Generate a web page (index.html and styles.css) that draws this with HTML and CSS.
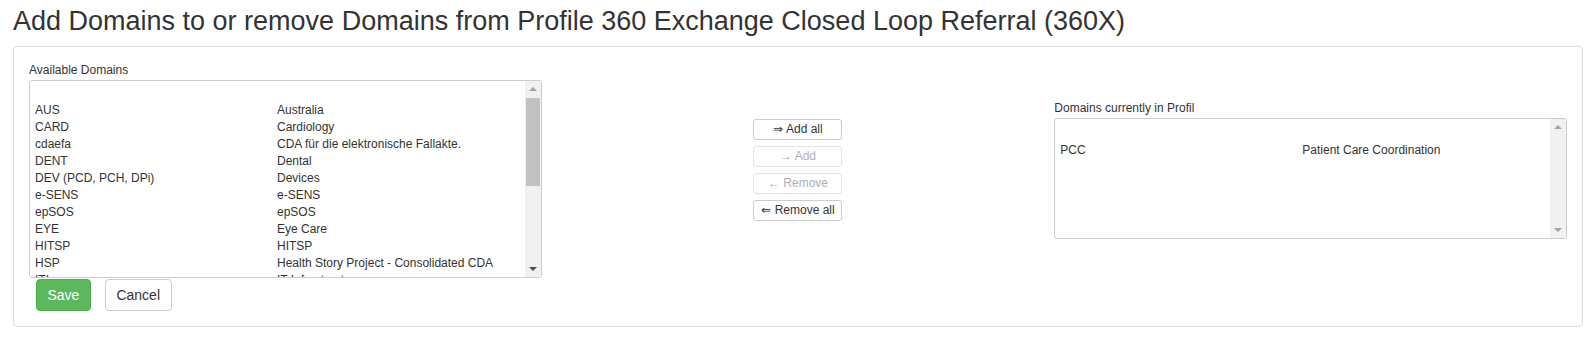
FILE: index.html
```html
<!DOCTYPE html>
<html lang="de">

<head>
    <meta charset="UTF-8">
    <meta name="viewport" content="width=device-width, initial-scale=1.0">
    <title>Profile Domains</title>
    <link rel="stylesheet" href="styles.css">
</head>

<body>
    <h1 class="page-title">Add Domains to or remove Domains from Profile 360 Exchange Closed Loop Referral (360X)</h1>

    <div class="panel">
        <div class="picker">
            <!-- verfügbare Domains -->
            <div class="picker-col">
                <div class="field-label">Available Domains</div>
                <div class="listbox listbox-tall">
                    <div class="listbox-items">
                        <div class="item"></div>
                        <div class="item"><span class="code">AUS</span><span>Australia</span></div>
                        <div class="item"><span class="code">CARD</span><span>Cardiology</span></div>
                        <div class="item"><span class="code">cdaefa</span><span>CDA für die elektronische Fallakte.</span></div>
                        <div class="item"><span class="code">DENT</span><span>Dental</span></div>
                        <div class="item"><span class="code">DEV (PCD, PCH, DPi)</span><span>Devices</span></div>
                        <div class="item"><span class="code">e-SENS</span><span>e-SENS</span></div>
                        <div class="item"><span class="code">epSOS</span><span>epSOS</span></div>
                        <div class="item"><span class="code">EYE</span><span>Eye Care</span></div>
                        <div class="item"><span class="code">HITSP</span><span>HITSP</span></div>
                        <div class="item"><span class="code">HSP</span><span>Health Story Project - Consolidated CDA</span></div>
                        <div class="item"><span class="code">ITI</span><span>IT Infrastructure</span></div>
                        <div class="item"><span class="code">LAB</span><span>Laboratory</span></div>
                    </div>
                    <div class="scrollbar">
                        <span class="arrow arrow-up"></span>
                        <div class="track"><div class="thumb"></div></div>
                        <span class="arrow arrow-down active"></span>
                    </div>
                </div>
            </div>

            <!-- Aktionen -->
            <div class="picker-actions">
                <button class="move-btn">⇒ Add all</button>
                <button class="move-btn" disabled>→ Add</button>
                <button class="move-btn" disabled>← Remove</button>
                <button class="move-btn">⇐ Remove all</button>
            </div>

            <!-- Domains im Profil -->
            <div class="picker-col">
                <div class="field-label">Domains currently in Profil</div>
                <div class="listbox listbox-short">
                    <div class="listbox-items">
                        <div class="item"></div>
                        <div class="item"><span class="code">PCC</span><span>Patient Care Coordination</span></div>
                    </div>
                    <div class="scrollbar">
                        <span class="arrow arrow-up"></span>
                        <div class="track"></div>
                        <span class="arrow arrow-down"></span>
                    </div>
                </div>
            </div>
        </div>

        <div class="form-actions">
            <button class="btn btn-save">Save</button>
            <button class="btn btn-cancel">Cancel</button>
        </div>
    </div>
</body>

</html>
```

FILE: styles.css
```css
body {
    font-family: 'Liberation Sans', Arial, sans-serif;
    font-size: 12px;
    color: #333;
    background: #fff;
    margin: 0;
    padding: 0 10px 0 13px;
}

.page-title {
    font-size: 27px;
    font-weight: normal;
    line-height: 1.1;
    margin: 7px 0 9px;
    color: #333;
}

.panel {
    border: 1px solid #ddd;
    border-radius: 4px;
    padding: 15px 15px 15px;
}

/* Auswahl */
.picker {
    display: grid;
    grid-template-columns: 1fr 1fr 1fr;
    align-items: center;
}

.field-label {
    line-height: 16px;
    margin-bottom: 2px;
}

.listbox {
    display: flex;
    border: 1px solid #ccc;
    border-radius: 3px;
    overflow: hidden;
}

.listbox-tall {
    height: 196px;
}

.listbox-short {
    height: 119px;
}

.listbox-items {
    flex: 1;
    padding: 4px 6px 0 5px;
    overflow: hidden;
}

.listbox-short .listbox-items {
    padding-top: 6px;
}

.item {
    display: grid;
    grid-template-columns: 242px 1fr;
    height: 17px;
    line-height: 17px;
    white-space: nowrap;
}

.scrollbar {
    width: 16px;
    background: #f1f1f1;
    display: flex;
    flex-direction: column;
    align-items: center;
}

.arrow {
    width: 0;
    height: 0;
    border-left: 4px solid transparent;
    border-right: 4px solid transparent;
    margin: 6px 0;
}

.arrow-up {
    border-bottom: 4px solid #a3a3a3;
}

.arrow-down {
    border-top: 4px solid #a3a3a3;
}

.arrow-down.active {
    border-top-color: #505050;
}

.track {
    flex: 1;
    align-self: stretch;
    padding: 0 1px;
}

.thumb {
    margin-top: 1px;
    height: 88px;
    background: #c1c1c1;
}

/* Verschieben */
.picker-actions {
    display: flex;
    flex-direction: column;
    align-items: center;
    gap: 6px;
}

.move-btn {
    width: 89px;
    height: 21px;
    padding: 0;
    font-family: inherit;
    font-size: 12px;
    color: #333;
    background: #fff;
    border: 1px solid #ccc;
    border-radius: 3px;
}

.move-btn:disabled {
    color: #b0b0b0;
    border-color: #e3e3e3;
}

/* Speichern */
.form-actions {
    display: flex;
    gap: 14px;
    margin-top: 1px;
    padding-left: 7px;
}

.btn {
    font-family: inherit;
    font-size: 14px;
    line-height: 18px;
    padding: 6px 10.5px;
    border-radius: 4px;
    border: 1px solid #ccc;
    background: #fff;
    color: #333;
}

.btn-save {
    background: #5cb85c;
    border-color: #4cae4c;
    color: #fff;
}
```
